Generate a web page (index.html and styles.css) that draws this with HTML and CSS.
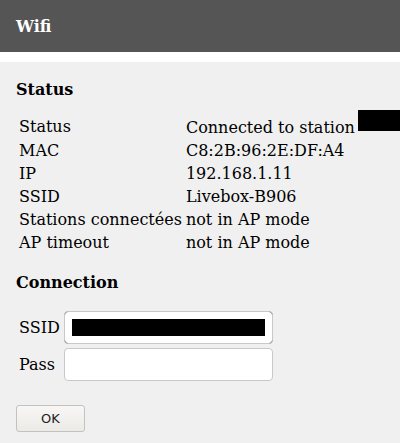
FILE: index.html
```html
<!DOCTYPE html>
<html>
<head>
<meta charset="utf-8">
<link rel="stylesheet" href="styles.css">
</head>
<body>
<header class="topbar"><h1 class="title">Wifi</h1></header>
<main class="content">
  <h2 class="section">Status</h2>
  <table class="info">
    <tr><td>Status</td><td>Connected to station<span class="redact"></span></td></tr>
    <tr><td>MAC</td><td>C8:2B:96:2E:DF:A4</td></tr>
    <tr><td>IP</td><td>192.168.1.11</td></tr>
    <tr><td>SSID</td><td>Livebox-B906</td></tr>
    <tr><td>Stations connectées</td><td>not in AP mode</td></tr>
    <tr><td>AP timeout</td><td>not in AP mode</td></tr>
  </table>
  <h2 class="section section-conn">Connection</h2>
  <form class="conn">
    <table class="fields">
      <tr><td><label for="ssid">SSID</label></td><td><input id="ssid" class="field field-redacted" type="text" value=""></td></tr>
      <tr><td><label for="pass">Pass</label></td><td><input id="pass" class="field" type="password" value=""></td></tr>
    </table>
    <button type="button" class="ok">OK</button>
  </form>
</main>
</body>
</html>
```
FILE: styles.css
```css
html, body {
  margin: 0;
  padding: 0;
  background: #f0f0f0;
  overflow: hidden;
}
body {
  font-family: "DejaVu Serif", serif;
  font-size: 16px;
  color: #000;
}
.topbar {
  background: #555555;
  height: 52px;
  display: flex;
  align-items: center;
  padding: 0 16px;
  border-bottom: 10px solid #ffffff;
}
.title {
  margin: 0;
  color: #fff;
  font-size: 16px;
  font-weight: bold;
}
.content {
  padding: 0 16px 16px;
}
.section {
  font-size: 16px;
  font-weight: bold;
  margin: 18px 0 14px;
}
.section-conn {
  margin-bottom: 16px;
}
.info {
  border-spacing: 2px;
  white-space: nowrap;
}
.info td {
  padding: 1px;
}
.redact {
  display: inline-block;
  width: 42px;
  height: 21px;
  margin-left: 3px;
  margin-top: -6px;
  background: #000;
  vertical-align: 2px;
}
.fields {
  border-spacing: 2px;
}
.fields td {
  padding: 1px;
}
.field {
  box-sizing: border-box;
  width: 209px;
  height: 33px;
  border: 1px solid #c8c8c8;
  border-radius: 4px;
  background: #fff;
  margin: 0;
  font: inherit;
  display: block;
}
.field-redacted {
  background: #000;
  box-shadow: inset 0 0 0 7px #fff;
}
.ok {
  margin-top: 21px;
  width: 69px;
  height: 27px;
  font-family: "DejaVu Sans", sans-serif;
  font-size: 13px;
  color: #222;
  background: linear-gradient(#f8f7f5, #eceae7);
  border: 1px solid #c4c2bf;
  border-radius: 3px;
}
```
